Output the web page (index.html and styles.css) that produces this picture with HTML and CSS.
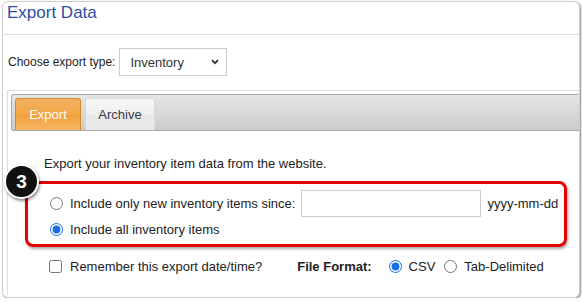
FILE: index.html
```html
<!DOCTYPE html>
<html lang="en">
<head>
<meta charset="utf-8">
<title>Export Data</title>
<link rel="stylesheet" href="styles.css">
</head>
<body>
<div class="panel">
  <div class="panel-head"><h1 class="title">Export Data</h1></div>
  <div class="filter-row">
    <label class="filter-label" for="etype">Choose export type:</label>
    <div class="select-wrap">
      <select id="etype" class="select"><option>Inventory</option></select>
      <svg class="chev" width="8" height="6" viewBox="0 0 8 6"><path d="M1 1.2 L4 4.2 L7 1.2" fill="none" stroke="#333" stroke-width="1.8"/></svg>
    </div>
  </div>
  <div class="tabs-wrap">
    <div class="tab-bar">
      <div class="tab tab-active">Export</div>
      <div class="tab tab-idle">Archive</div>
    </div>
    <div class="content">
      <p class="intro">Export your inventory item data from the website.</p>
      <div class="callout">
        <div class="badge">3</div>
        <div class="opt-row opt-row-first">
          <input type="radio" name="range" class="radio">
          <span>Include only new inventory items since:</span>
          <input type="text" class="date-input">
          <span class="hint">yyyy-mm-dd</span>
        </div>
        <div class="opt-row">
          <input type="radio" name="range" class="radio" checked>
          <span>Include all inventory items</span>
        </div>
      </div>
      <div class="bottom-row">
        <input type="checkbox" class="check">
        <span>Remember this export date/time?</span>
        <span class="ff-label">File Format:</span>
        <input type="radio" name="fmt" class="radio" checked>
        <span>CSV</span>
        <input type="radio" name="fmt" class="radio radio-gap">
        <span>Tab-Delimited</span>
      </div>
    </div>
  </div>
</div>
</body>
</html>
```

FILE: styles.css
```css
* { box-sizing: border-box; }
html, body { margin: 0; padding: 0; background: #fff; }
body {
  font-family: "Liberation Sans", Arial, sans-serif;
  font-size: 13px;
  color: #333;
}
.panel {
  margin: 1px 0 0 2px;
  width: 578px;
  height: 297px;
  border: 1px solid #cfcfcf;
  border-radius: 6px;
  box-shadow: 1px 1px 2px rgba(0,0,0,0.45);
  overflow: hidden;
  background: #fff;
}
.panel-head {
  height: 33px;
  border-bottom: 1px solid #dcdcdc;
  padding: 1px 4px 0;
}
.title {
  margin: 0;
  font-size: 17px;
  line-height: 20px;
  font-weight: normal;
  color: #2f4ea5;
}
.filter-row {
  display: flex;
  align-items: center;
  gap: 4px;
  padding: 13px 5px 14px;
}
.filter-label { font-size: 12px; color: #222; }
.select-wrap { position: relative; }
.select {
  appearance: none;
  -webkit-appearance: none;
  width: 108px;
  height: 28px;
  border: 1px solid #cccccc;
  border-radius: 0;
  background: #fff;
  padding: 0 0 0 10px;
  font-family: inherit;
  font-size: 13px;
  color: #333;
}
.chev { position: absolute; right: 8px; top: 11px; }
.tabs-wrap {
  margin-left: 4px;
  border: 1px solid #dddddd;
  border-bottom: none;
  border-right: none;
  padding: 3px 0 0 3px;
  height: 205px;
}
.tab-bar {
  display: flex;
  gap: 4px;
  height: 37px;
  padding: 3px 3px 0;
  border: 1px solid #a9a9a9;
  border-right: none;
  border-radius: 3px 0 0 3px;
  background: linear-gradient(#e6e6e6, #cbcbcb);
}
.tab {
  height: 32px;
  display: flex;
  align-items: center;
  justify-content: center;
  border-radius: 3px 3px 0 0;
  font-size: 13px;
}
.tab-active {
  width: 66px;
  color: #fff;
  border: 1px solid #cf8a32;
  border-bottom: none;
  background: linear-gradient(#f4b263 0%, #f2a646 50%, #f0a03e 52%, #f6b661 100%);
}
.tab-idle {
  width: 70px;
  color: #3a3a4a;
  border: 1px solid #dadada;
  border-bottom: none;
  background: linear-gradient(#f7f7f7 0%, #efefef 50%, #e8e8e8 52%, #e9e9e9 100%);
}
.content { padding: 25px 0 0 14px; }
.intro {
  margin: 0 0 9px 19px;
  line-height: 16px;
  color: #222;
}
.callout {
  position: relative;
  width: 542px;
  height: 66px;
  border: 3px solid #e60000;
  border-radius: 8px;
  box-shadow: 1px 2px 3px rgba(0,0,0,0.35);
  padding: 6px 0 0 16px;
  display: flex;
  flex-direction: column;
  gap: 2px;
}
.badge {
  position: absolute;
  left: -24px;
  top: -20px;
  width: 35px;
  height: 35px;
  border-radius: 50%;
  background: #111;
  border: 2px solid #fff;
  box-shadow: 1px 2px 3px rgba(0,0,0,0.45);
  color: #fff;
  font-weight: bold;
  font-size: 19px;
  display: flex;
  align-items: center;
  justify-content: center;
}
.opt-row {
  display: flex;
  align-items: center;
  height: 20px;
  color: #222;
}
.opt-row-first { height: 27px; }
.radio {
  width: 13px;
  height: 13px;
  margin: 0 7px 0 6px;
  accent-color: #1a6fe6;
}
.date-input {
  width: 180px;
  height: 27px;
  margin-left: 6px;
  border: 1px solid #cccccc;
  border-radius: 0;
}
.hint { margin-left: 6px; }
.bottom-row {
  display: flex;
  align-items: center;
  height: 20px;
  margin-top: 9px;
  margin-left: 19px;
  color: #222;
}
.bottom-row .radio { margin: 0 7px 0 5px; }
.check {
  width: 13px;
  height: 13px;
  margin: 0 8px 0 5px;
}
.ff-label {
  font-weight: bold;
  margin-left: 35px;
  margin-right: 12px;
}
.bottom-row .radio-gap { margin-left: 9px; }
```
